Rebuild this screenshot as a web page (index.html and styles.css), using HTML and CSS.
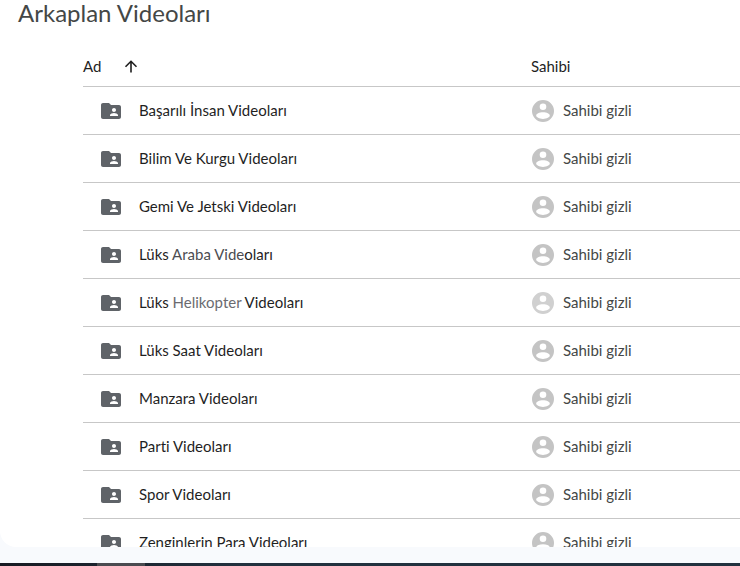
FILE: index.html
```html
<!DOCTYPE html>
<html lang="tr">
<head>
  <meta charset="UTF-8">
  <meta name="viewport" content="width=device-width, initial-scale=1.0">
  <title>Arkaplan Videoları</title>
  <link rel="stylesheet" href="styles.css">
</head>
<body>
  <svg class="sprite" aria-hidden="true">
    <symbol id="folder" viewBox="0 0 24 24">
      <path fill-rule="evenodd" d="M20 6h-8l-2-2H4c-1.100 0-1.990.9-1.990 2L2 18c0 1.100.9 2 2 2h16c1.100 0 2-.9 2-2V8c0-1.100-.9-2-2-2zm-5 3c1.100 0 2 .9 2 2s-.9 2-2 2-2-.9-2-2 .9-2 2-2zm4 8h-8v-1c0-1.330 2.670-2 4-2s4 .67 4 2v1z"/>
    </symbol>
    <symbol id="person" viewBox="0 0 24 24">
      <path fill-rule="evenodd" d="M12 1a11 11 0 1 0 0 22 11 11 0 0 0 0-22zM12 4.500a3.300 3.300 0 1 1 0 6.600 3.300 3.300 0 0 1 0-6.600zM12 13.300c3.800 0 6.800 1.400 6.800 3.200S15.800 19.900 12 19.900s-6.800-1.600-6.800-3.400 3-3.200 6.800-3.200z"/>
    </symbol>
  </svg>
  <main class="panel">
    <h1 class="title">Arkaplan Videoları</h1>
    <table class="files">
      <thead>
        <tr>
          <th class="name-col">
            <div class="sort">
              <span class="label">Ad</span>
              <button class="sort-button" aria-label="Sırala">
                <svg viewBox="0 0 14 14"><path d="M7 12.500V1.500M1.500 6.800L7 1.300l5.500 5.500"/></svg>
              </button>
            </div>
          </th>
          <th class="owner-col"><div class="label">Sahibi</div></th>
        </tr>
      </thead>
      <tbody id="rows"></tbody>
    </table>
  </main>
  <div class="taskbar"><div class="taskbar-active"></div></div>
  <script src="script.js"></script>
</body>
</html>
```

FILE: styles.css
```css
body {
  font-family: Lato, "Liberation Sans", sans-serif;
  font-size: 15px;
  font-variant-ligatures: none;
  margin: 0;
  height: 100vh;
  display: flex;
  flex-direction: column;
  background: #f8fafd;
  color: #1f1f1f;
}

.sprite {
  display: none;
}

.panel {
  flex: 1;
  min-height: 0;
  overflow: hidden;
  margin-bottom: 16px;
  background: #ffffff;
  border-radius: 0 0 0 16px;
}

.title {
  margin: 0 0 22px 18px;
  font-size: 24px;
  line-height: 26px;
  font-weight: 400;
  color: #444746;
}

.files {
  width: calc(100% - 83px);
  margin-left: 83px;
  table-layout: fixed;
  border-collapse: separate;
  border-spacing: 0;
}

.files th,
.files td {
  box-sizing: border-box;
  height: 48px;
  padding: 0;
  border-bottom: 1px solid #c7c7c7;
  text-align: left;
  font-weight: 400;
  white-space: nowrap;
}

.files th {
  height: 39px;
}

.owner-col {
  width: 209px;
}

.label {
  padding-bottom: 2px;
}

.sort {
  display: flex;
  align-items: center;
  gap: 23px;
}

.sort-button {
  display: flex;
  padding: 0;
  border: none;
  background: none;
  cursor: pointer;
}

.sort-button svg {
  width: 14px;
  height: 14px;
  fill: none;
  stroke: #1f1f1f;
  stroke-width: 1.6;
}

.item {
  display: flex;
  align-items: center;
}

.name {
  gap: 16px;
  padding-left: 16px;
}

.owner {
  gap: 8px;
  color: #444746;
}

.icon {
  width: 24px;
  height: 24px;
  flex-shrink: 0;
  fill: #5f6368;
}

.owner .icon {
  fill: #c4c4c4;
}

.owner .icon.pale {
  fill: #d0d0d0;
}

.soft {
  color: #4c4d52;
}

.faded {
  color: #6b6b70;
}

.taskbar {
  height: 3px;
  padding-left: 97px;
  background: linear-gradient(to right, #171a22, #22313f 240px);
}

.taskbar-active {
  width: 48px;
  height: 3px;
  background: #4a4b50;
}
```

FILE: script.js
```js
const folders = [
  'Başarılı İnsan Videoları',
  'Bilim Ve Kurgu Videoları',
  'Gemi Ve Jetski Videoları',
  'Lüks <span class="soft">Araba Vide</span>oları',
  'Lüks <span class="faded">Helikopter</span> Videoları',
  'Lüks Saat Videoları',
  'Manzara Videoları',
  'Parti Videoları',
  'Spor Videoları',
  'Zenginlerin Para Videoları'
];

document.getElementById('rows').innerHTML = folders.map((name, i) => `
  <tr>
    <td><div class="item name"><svg class="icon"><use href="#folder"/></svg><span class="label">${name}</span></div></td>
    <td><div class="item owner"><svg class="icon${i === 4 ? ' pale' : ''}"><use href="#person"/></svg><span class="label">Sahibi gizli</span></div></td>
  </tr>
`).join('');
```
